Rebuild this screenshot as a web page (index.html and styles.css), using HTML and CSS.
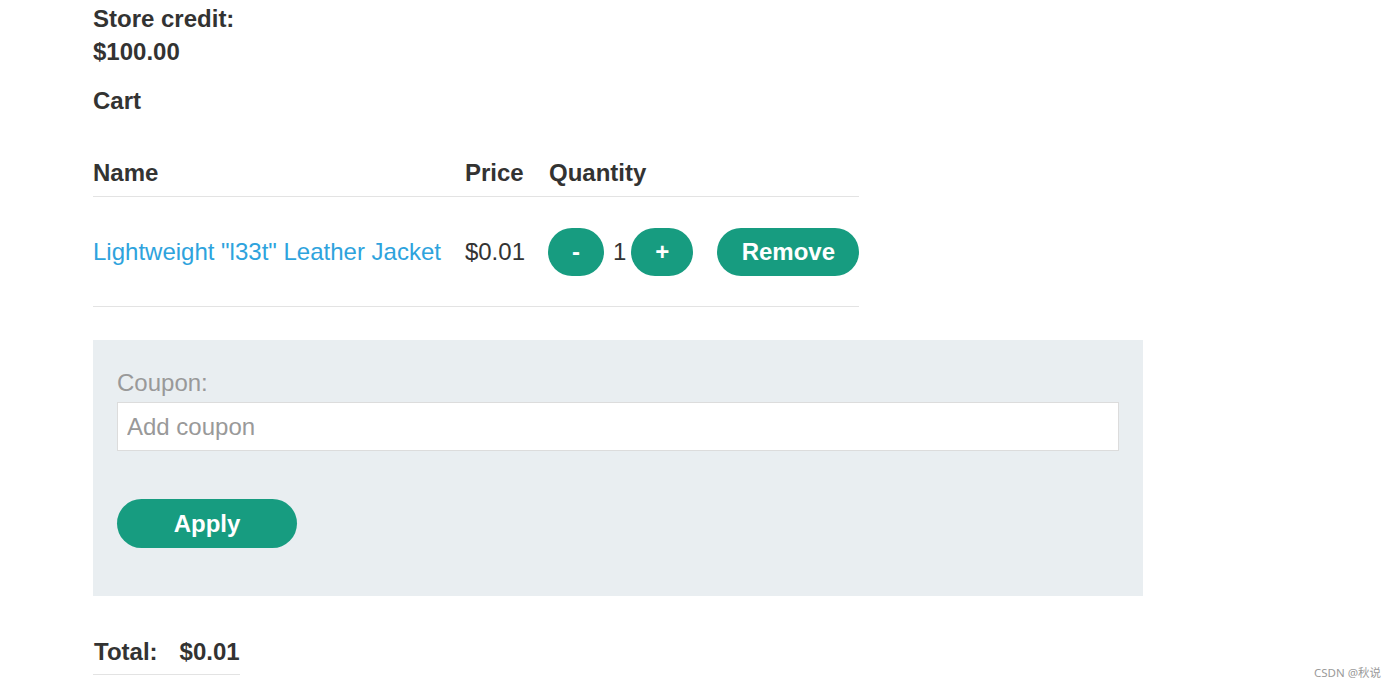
FILE: index.html
```html
<!DOCTYPE html>
<html>
<head>
<meta charset="utf-8">
<link rel="stylesheet" href="styles.css">
</head>
<body>
<div class="page">
  <p class="credit">Store credit:<br>$100.00</p>
  <p class="cart-title">Cart</p>
  <table class="cart">
    <thead>
      <tr><th>Name</th><th>Price</th><th>Quantity</th></tr>
    </thead>
    <tbody>
      <tr>
        <td><a class="item-link" href="#">Lightweight "l33t" Leather Jacket</a></td>
        <td>$0.01</td>
        <td>
          <div class="qty">
            <button class="btn btn-minus">-</button>
            <span class="qty-num">1</span>
            <button class="btn btn-plus">+</button>
            <button class="btn btn-remove">Remove</button>
          </div>
        </td>
      </tr>
    </tbody>
  </table>
  <form class="coupon">
    <label class="coupon-label">Coupon:</label>
    <input class="coupon-input" type="text" placeholder="Add coupon">
    <button class="btn btn-apply" type="button">Apply</button>
  </form>
  <table class="total">
    <tr><th>Total:</th><th>$0.01</th></tr>
  </table>
</div>
<div class="watermark">CSDN @秋说</div>
</body>
</html>
```
FILE: styles.css
```css
html, body {
  margin: 0;
  padding: 0;
  background: #fff;
}
body {
  font-family: "Liberation Sans", Arial, sans-serif;
  font-size: 24px;
  line-height: 33px;
  color: #333332;
}
.page {
  padding: 2px 0 0 93px;
}
.credit {
  margin: 0;
  font-weight: bold;
}
.cart-title {
  margin: 15.5px 0 0;
  font-weight: bold;
}
.cart {
  border-collapse: collapse;
  margin-top: 39px;
}
.cart th {
  text-align: left;
  font-weight: bold;
  padding: 0 24px 7.5px 0;
  border-bottom: 1px solid #e3e3e3;
}
.cart td {
  height: 109px;
  padding: 0 24px 0 0;
  border-bottom: 1px solid #e3e3e3;
  vertical-align: middle;
  white-space: nowrap;
}
.cart th:last-child, .cart td:last-child {
  padding-right: 0;
}
.item-link {
  color: #2ea3dd;
  text-decoration: none;
}
.qty {
  display: flex;
  align-items: center;
  margin-left: -1px;
}
.btn {
  font-family: "Liberation Sans", Arial, sans-serif;
  font-size: 24px;
  font-weight: bold;
  color: #fff;
  background: #179c80;
  border: none;
  border-radius: 25px;
  height: 48px;
  padding: 0;
  cursor: pointer;
}
.btn-minus { width: 56px; }
.btn-plus { width: 62px; }
.qty-num { margin: 0 5px 0 9px; }
.btn-remove { width: 142px; margin-left: 24px; }
.coupon {
  display: flex;
  flex-direction: column;
  align-items: flex-start;
  width: 1050px;
  box-sizing: border-box;
  margin-top: 33px;
  padding: 26px 24px 48px;
  background: #e9eef1;
}
.coupon-label {
  color: #999;
}
.coupon-input {
  margin-top: 3px;
  width: 1002px;
  height: 49px;
  box-sizing: border-box;
  border: 1px solid #dcdcdc;
  background: #fff;
  padding: 0 9px;
  font-family: "Liberation Sans", Arial, sans-serif;
  font-size: 24px;
  color: #333;
  outline: none;
}
.coupon-input::placeholder {
  color: #999;
}
.btn-apply {
  margin-top: 48px;
  width: 180px;
  height: 49px;
}
.total {
  border-collapse: collapse;
  margin-top: 39px;
}
.total th {
  text-align: left;
  font-weight: bold;
  padding: 0 22px 5.5px 0;
  border-bottom: 1px solid #e3e3e3;
}
.total th:first-child { padding-left: 1px; }
.total th:last-child { padding-right: 0; }
.watermark {
  position: absolute;
  right: 15px;
  bottom: 8px;
  font-family: "Noto Sans", "Noto Sans CJK SC", sans-serif;
  font-size: 11.5px;
  line-height: 14px;
  color: #9a9a9a;
}
```
